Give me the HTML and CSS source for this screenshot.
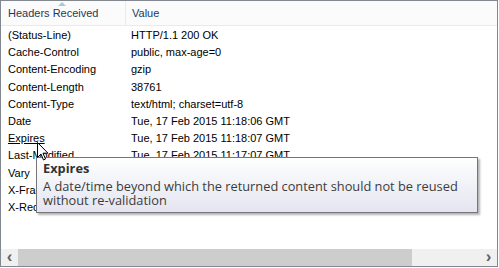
FILE: index.html
```html
<!DOCTYPE html>
<html lang="en">
<head>
    <meta charset="UTF-8">
    <title>Response Headers</title>
    <link rel="stylesheet" href="styles.css">
</head>
<body>
    <div class="frame">
        <div class="list">
            <div class="head">
                <div class="col col-name">Headers Received<span class="sort"></span></div>
                <div class="col col-value">Value</div>
            </div>
            <div class="rows">
                <div class="row"><div class="col-name">(Status-Line)</div><div class="col-value">HTTP/1.1 200 OK</div></div>
                <div class="row"><div class="col-name">Cache-Control</div><div class="col-value">public, max-age=0</div></div>
                <div class="row"><div class="col-name">Content-Encoding</div><div class="col-value">gzip</div></div>
                <div class="row"><div class="col-name">Content-Length</div><div class="col-value">38761</div></div>
                <div class="row"><div class="col-name">Content-Type</div><div class="col-value">text/html; charset=utf-8</div></div>
                <div class="row"><div class="col-name">Date</div><div class="col-value">Tue, 17 Feb 2015 11:18:06 GMT</div></div>
                <div class="row hover"><div class="col-name">Expires</div><div class="col-value">Tue, 17 Feb 2015 11:18:07 GMT</div></div>
                <div class="row"><div class="col-name">Last-Modified</div><div class="col-value">Tue, 17 Feb 2015 11:17:07 GMT</div></div>
                <div class="row"><div class="col-name">Vary</div><div class="col-value">Accept-Encoding</div></div>
                <div class="row"><div class="col-name">X-Frame-Options</div><div class="col-value">SAMEORIGIN</div></div>
                <div class="row"><div class="col-name">X-Request-Guid</div><div class="col-value">f2b3c1a0-9d4e-4c1b-8a7f-2e6d5b9c0a13</div></div>
            </div>
        </div>
        <div class="scrollbar">
            <div class="arrow">&lsaquo;</div>
            <div class="thumb"></div>
            <div class="track"></div>
            <div class="arrow">&rsaquo;</div>
        </div>

        <div class="tooltip">
            <div class="tip-title">Expires</div>
            <div class="tip-text">A date/time beyond which the returned content should not be reused without re-validation</div>
        </div>

        <svg class="cursor" width="12" height="19" viewBox="0 0 12 19">
            <path d="M0.5 0.5 L0.5 15.5 L4 12 L6.5 18 L8.5 17 L6 11.2 L11 11.2 Z" fill="#fff" stroke="#000" stroke-width="1"/>
        </svg>
    </div>
</body>
</html>
```

FILE: styles.css
```css
body {
    margin: 0;
    padding: 0;
    background: #fff;
    font-family: "Liberation Sans", Arial, sans-serif;
    font-size: 11px;
    color: #000;
}

.frame {
    position: relative;
    width: 496px;
    height: 265px;
    border: 1px solid #828790;
    display: flex;
    flex-direction: column;
    overflow: hidden;
}

.list {
    flex: 1;
    overflow: hidden;
}

.head {
    display: flex;
    height: 24px;
    background: #fbfbfc;
    border-bottom: 1px solid #e5ebf2;
}

.head .col {
    position: relative;
    line-height: 25px;
    color: #1e395b;
}

.head .col-name {
    border-right: 1px solid #e5ebf2;
}

.sort {
    position: absolute;
    left: 57px;
    top: 1px;
    width: 0;
    height: 0;
    border-left: 4px solid transparent;
    border-right: 4px solid transparent;
    border-bottom: 4px solid #a8c8e0;
}

.col-name {
    width: 117px;
    padding-left: 7px;
    white-space: nowrap;
    overflow: hidden;
}

.col-value {
    padding-left: 6px;
    white-space: nowrap;
}

.rows {
    padding-top: 1px;
}

.row {
    display: flex;
    height: 17.2px;
    line-height: 17px;
}

.row.hover .col-name {
    text-decoration: underline;
}

.scrollbar {
    display: flex;
    height: 17px;
    background: #f0f0f0;
}

.arrow {
    width: 17px;
    text-align: center;
    font-size: 17px;
    font-weight: bold;
    line-height: 15px;
    color: #606060;
}

.thumb {
    width: 394px;
    background: #cdcdcd;
}

.track {
    flex: 1;
}

.tooltip {
    position: absolute;
    left: 35px;
    top: 156px;
    width: 428px;
    padding: 3px 6px 5px 6px;
    border: 1px solid #767676;
    background: linear-gradient(#ffffff, #e4e5f0);
    box-shadow: 2px 2px 2px rgba(0, 0, 0, 0.3);
    font-family: "Open Sans", "Segoe UI", sans-serif;
    font-size: 12.8px;
    color: #3c3c3c;
    line-height: 14px;
}

.tip-title {
    font-weight: bold;
    color: #333;
    margin-bottom: 4px;
}

.cursor {
    position: absolute;
    left: 36px;
    top: 141px;
}
```
